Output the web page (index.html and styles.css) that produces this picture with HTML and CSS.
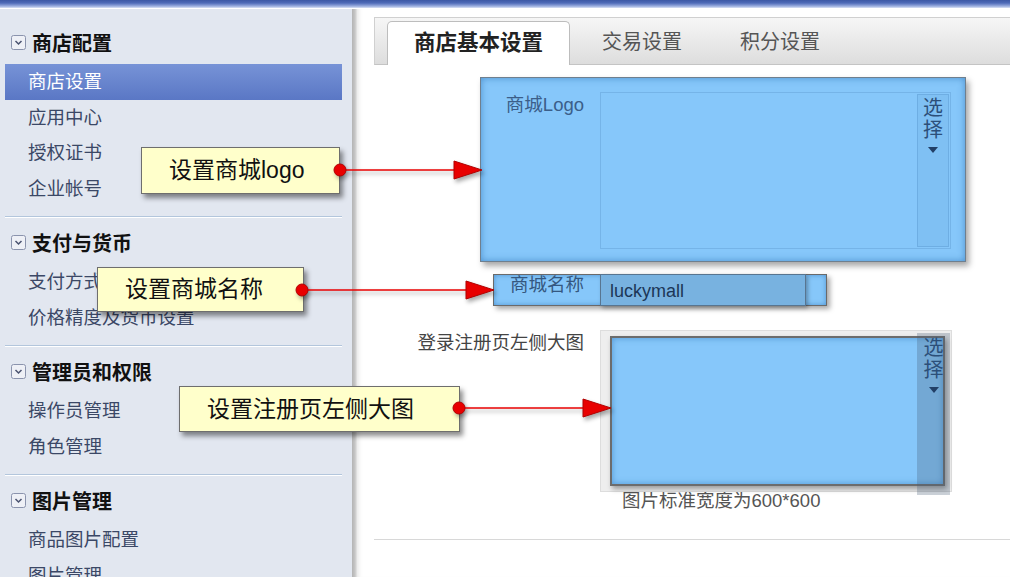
FILE: index.html
```html
<!DOCTYPE html>
<html lang="zh-CN">
<head>
<meta charset="utf-8">
<title>商店设置</title>
<link rel="stylesheet" href="styles.css">
</head>
<body>
<div class="page">
  <div class="topbar"></div>
  <div class="layout">
    <aside class="sidebar">
      <section class="group">
        <h3 class="group-title"><svg class="toggle" width="15" height="15" viewBox="0 0 15 15"><rect x="0.5" y="0.5" width="14" height="14" rx="2" fill="#eef0f6" stroke="#8a93ad"/><path d="M4.5 6 L7.5 9 L10.5 6" fill="none" stroke="#4a5270" stroke-width="1.5"/></svg>商店配置</h3>
        <ul class="menu">
          <li class="active">商店设置</li>
          <li>应用中心</li>
          <li>授权证书</li>
          <li>企业帐号</li>
        </ul>
      </section>
      <section class="group">
        <h3 class="group-title"><svg class="toggle" width="15" height="15" viewBox="0 0 15 15"><rect x="0.5" y="0.5" width="14" height="14" rx="2" fill="#eef0f6" stroke="#8a93ad"/><path d="M4.5 6 L7.5 9 L10.5 6" fill="none" stroke="#4a5270" stroke-width="1.5"/></svg>支付与货币</h3>
        <ul class="menu">
          <li>支付方式</li>
          <li>价格精度及货币设置</li>
        </ul>
      </section>
      <section class="group">
        <h3 class="group-title"><svg class="toggle" width="15" height="15" viewBox="0 0 15 15"><rect x="0.5" y="0.5" width="14" height="14" rx="2" fill="#eef0f6" stroke="#8a93ad"/><path d="M4.5 6 L7.5 9 L10.5 6" fill="none" stroke="#4a5270" stroke-width="1.5"/></svg>管理员和权限</h3>
        <ul class="menu">
          <li>操作员管理</li>
          <li>角色管理</li>
        </ul>
      </section>
      <section class="group">
        <h3 class="group-title"><svg class="toggle" width="15" height="15" viewBox="0 0 15 15"><rect x="0.5" y="0.5" width="14" height="14" rx="2" fill="#eef0f6" stroke="#8a93ad"/><path d="M4.5 6 L7.5 9 L10.5 6" fill="none" stroke="#4a5270" stroke-width="1.5"/></svg>图片管理</h3>
        <ul class="menu">
          <li>商品图片配置</li>
          <li>图片管理</li>
        </ul>
      </section>
    </aside>
    <div class="divider"></div>
    <main class="main">
      <nav class="tabs">
        <div class="tab active">商店基本设置</div>
        <div class="tab">交易设置</div>
        <div class="tab">积分设置</div>
      </nav>
      <div class="form">
        <div class="row row-logo">
          <label class="label">商城Logo</label>
          <div class="picker">
            <div class="picker-area"></div>
            <div class="picker-btn">选<br>择<span class="caret"></span></div>
          </div>
        </div>
        <div class="row row-name">
          <label class="label">商城名称</label>
          <div class="input">luckymall</div>
        </div>
        <div class="row row-pic">
          <label class="label">登录注册页左侧大图</label>
          <div class="field">
            <div class="frame">
              <div class="pic-box"></div>
              <div class="pic-btn">选<br>择<span class="caret"></span></div>
            </div>
            <div class="hint">图片标准宽度为600*600</div>
          </div>
        </div>
      </div>
      <div class="rule"></div>
    </main>
  </div>

  <div class="annotations">
    <div class="note note-logo">设置商城logo</div>
    <div class="note note-name">设置商城名称</div>
    <div class="note note-pic">设置注册页左侧大图</div>
    <svg class="arrows" width="1010" height="577" viewBox="0 0 1010 577">
      <g stroke="#b00000" stroke-width="1">
        <line x1="340" y1="170" x2="456" y2="170" stroke="#e80000" stroke-width="1.6"/>
        <polygon points="454,161 482,170 454,179" fill="#e80000"/>
        <circle cx="340" cy="170" r="6" fill="#e80000"/>

        <line x1="302" y1="290" x2="468" y2="290" stroke="#e80000" stroke-width="1.6"/>
        <polygon points="466,281 494,290 466,299" fill="#e80000"/>
        <circle cx="302" cy="290" r="6" fill="#e80000"/>

        <line x1="459" y1="408" x2="585" y2="408" stroke="#e80000" stroke-width="1.6"/>
        <polygon points="583,399 611,408 583,417" fill="#e80000"/>
        <circle cx="459" cy="408" r="6" fill="#e80000"/>
      </g>
    </svg>
  </div>
</div>
</body>
</html>
```

FILE: styles.css
```css
* { box-sizing: border-box; }
html, body { margin: 0; padding: 0; }
body {
  width: 1010px;
  height: 577px;
  overflow: hidden;
  background: #fff;
  font-family: "Liberation Sans", "Noto Sans CJK SC", sans-serif;
}
.page {
  position: relative;
  width: 1010px;
  height: 577px;
  display: flex;
  flex-direction: column;
}
.topbar {
  flex: none;
  height: 9px;
  background: linear-gradient(#3c57a4 0, #4f6bb8 3px, #7d93d0 5px, #b3c2e8 7px, #dfe6f6 8px, #ffffff 8px);
}
.layout {
  flex: 1;
  display: flex;
  min-height: 0;
}

/* Sidebar */
.sidebar {
  flex: none;
  width: 352px;
  background: #e2e7f0;
  padding: 11px 10px 0 5px;
  overflow: hidden;
}
.group {
  padding-bottom: 10px;
  border-bottom: 1px solid #b3c6dc;
  box-shadow: 0 1px 0 #ffffff;
}
.group + .group { padding-top: 3px; }
.group:last-child { border-bottom: none; box-shadow: none; }
.group-title {
  margin: 0;
  height: 44px;
  display: flex;
  align-items: center;
  gap: 6px;
  padding-left: 6px;
  font-size: 20px;
  font-weight: bold;
  color: #111;
}
.toggle { flex: none; }
.menu {
  list-style: none;
  margin: 0;
  padding: 0;
}
.menu li {
  height: 35.5px;
  line-height: 35.5px;
  padding-left: 23px;
  font-size: 18.5px;
  color: #3b4866;
  white-space: nowrap;
}
.menu li.active {
  background: linear-gradient(#7793d7, #5a77c5);
  color: #fff;
}
.divider {
  flex: none;
  width: 5px;
  background: linear-gradient(to right, #b4b4b4, #c6c6c6 60%, #e6e6e6);
}

/* Main */
.main {
  flex: 1;
  min-width: 0;
  padding: 8px 0 0 17px;
  box-shadow: inset 5px 0 5px -4px rgba(0, 0, 0, 0.12);
}
.tabs {
  height: 48px;
  display: flex;
  align-items: flex-end;
  padding-left: 12px;
  background: linear-gradient(#f6f6f6, #dddddd);
  border: 1px solid #d0d0d0;
  border-right: none;
  border-bottom-color: #c4c4c4;
}
.tab {
  height: 43px;
  line-height: 43px;
  padding: 0 26px;
  margin-left: 6px;
  font-size: 20px;
  color: #555;
  white-space: nowrap;
}
.tab.active {
  margin-left: 0;
  margin-bottom: -1px;
  height: 44px;
  background: #fff;
  border: 1px solid #bdbdbd;
  border-bottom: none;
  border-radius: 5px 5px 0 0;
  font-size: 21.5px;
  font-weight: bold;
  color: #222;
}

.form { display: flex; flex-direction: column; align-items: flex-start; }
.row { display: flex; }
.label {
  font-size: 18.5px;
  line-height: 22px;
  text-align: right;
  white-space: nowrap;
}

/* highlighted logo row */
.row-logo {
  margin: 12px 0 0 106px;
  width: 486px;
  height: 185px;
  padding-top: 14px;
  gap: 16px;
  background: #86c7fa;
  border: 1px solid #6f7f8e;
  box-shadow: 3px 4px 6px rgba(0, 0, 0, 0.35), inset 0 0 7px rgba(30, 100, 170, 0.55);
}
.row-logo .label {
  width: 103px;
  margin-top: 2px;
  color: #3b5e89;
}
.picker {
  width: 351px;
  height: 157px;
  display: flex;
  border: 1px solid #75b4e8;
}
.picker-area { flex: 1; }
.picker-btn {
  width: 32px;
  margin: 1px 1px 1px 0;
  background: #7fc0f3;
  border: 1px solid #6eaee3;
  text-align: center;
  font-size: 20px;
  line-height: 22px;
  padding-top: 2px;
  color: #2c4f79;
}
.caret {
  display: block;
  width: 0;
  height: 0;
  margin: 6px auto 0;
  border-left: 5px solid transparent;
  border-right: 5px solid transparent;
  border-top: 6px solid #223f66;
}

/* highlighted name row */
.row-name {
  margin: 12px 0 0 119px;
  width: 334px;
  height: 32px;
  gap: 16px;
  background: #86c7fa;
  border: 1px solid #6a6a6a;
  box-shadow: 3px 3px 5px rgba(0, 0, 0, 0.35), inset 0 0 5px rgba(30, 100, 170, 0.5);
}
.row-name .label {
  width: 90px;
  line-height: 20px;
  margin-top: 0;
  color: #35577f;
}
.input {
  width: 206px;
  margin: -1px 0;
  background: #78b2e0;
  border: 1px solid #587590;
  box-shadow: 2px 2px 4px rgba(0, 0, 0, 0.3);
  padding-left: 9px;
  font-size: 18px;
  line-height: 32px;
  color: #1c3657;
}

/* picture row */
.row-pic {
  margin-top: 24px;
  gap: 16px;
}
.row-pic .label {
  width: 210px;
  margin-top: 2px;
  color: #444;
}
.frame {
  position: relative;
  width: 352px;
  height: 162px;
  padding: 5px 6px 5px 9px;
  background: #eeeeee;
  border: 1px solid #dddddd;
  display: flex;
}
.pic-box {
  flex: 1;
  background: #86c7fa;
  border: 2px solid #6c6c6c;
  box-shadow: 2px 3px 5px rgba(0, 0, 0, 0.35), inset 0 0 6px rgba(30, 100, 170, 0.5);
}
.pic-btn {
  position: absolute;
  right: 1px;
  top: 2px;
  bottom: -4px;
  width: 33px;
  background: rgba(70, 90, 115, 0.28);
  text-align: center;
  font-size: 20px;
  line-height: 22px;
  padding-top: 4px;
  color: #2c4f79;
}
.hint {
  margin: -1px 0 0 22px;
  font-size: 18.5px;
  line-height: 20px;
  color: #555;
}
.rule {
  margin-top: 28px;
  border-top: 1px solid #d8d8d8;
}

/* annotations */
.annotations {
  position: absolute;
  inset: 0;
  pointer-events: none;
}
.arrows {
  position: absolute;
  left: 0;
  top: 0;
  filter: drop-shadow(2px 3px 2px rgba(0, 0, 0, 0.35));
}
.note {
  position: absolute;
  background: #ffffcb;
  border: 1px solid #6e6e6e;
  box-shadow: 3px 4px 5px rgba(0, 0, 0, 0.45);
  padding-left: 27px;
  font-size: 23px;
  color: #111;
  white-space: nowrap;
}
.note-logo { left: 141px; top: 147px; width: 199px; height: 47px; line-height: 45px; }
.note-name { left: 97px; top: 267px; width: 207px; height: 45px; line-height: 43px; }
.note-pic { left: 179px; top: 386px; width: 281px; height: 46px; line-height: 44px; }
```
